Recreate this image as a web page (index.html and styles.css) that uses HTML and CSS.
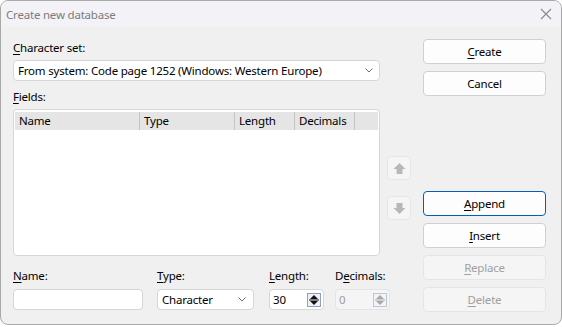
FILE: index.html
```html
<!DOCTYPE html>
<html lang="en">
<head>
    <meta charset="UTF-8">
    <title>Create new database</title>
    <link rel="stylesheet" href="styles.css">
</head>
<body>
    <div class="window">
        <div class="titlebar">
            <span class="title">Create new database</span>
            <svg class="close" width="12" height="12" viewBox="0 0 12 12">
                <path d="M1 1 L11 11 M11 1 L1 11" stroke="#8a8a8a" stroke-width="1.1" fill="none"/>
            </svg>
        </div>

        <div class="content">
            <div class="main">
                <div class="lbl"><u>C</u>haracter set:</div>
                <div class="select charset">
                    <span>From system: Code page 1252 (Windows: Western Europe)</span>
                    <svg class="chev" width="8" height="5" viewBox="0 0 8 5"><path d="M0.5 0.5 L4 4 L7.5 0.5" stroke="#707070" fill="none"/></svg>
                </div>

                <div class="lbl fields-lbl"><u>F</u>ields:</div>
                <div class="list-row">
                    <div class="listview">
                        <div class="lv-header">
                            <div class="col c-name">Name</div>
                            <div class="col c-type">Type</div>
                            <div class="col c-len">Length</div>
                            <div class="col c-dec">Decimals</div>
                            <div class="col c-fill"></div>
                        </div>
                    </div>
                    <div class="movers">
                        <button class="mover">
                            <svg width="13" height="13" viewBox="0 0 13 13"><polygon points="6.5,1 12.5,7 9.5,7 9.5,12 3.5,12 3.5,7 0.5,7" fill="#b8b8b8"/></svg>
                        </button>
                        <button class="mover">
                            <svg width="13" height="13" viewBox="0 0 13 13"><polygon points="6.5,12 12.5,6 9.5,6 9.5,1 3.5,1 3.5,6 0.5,6" fill="#b8b8b8"/></svg>
                        </button>
                    </div>
                </div>

                <div class="edit-row">
                    <div class="field f-name">
                        <div class="lbl"><u>N</u>ame:</div>
                        <div class="input name-input"></div>
                    </div>
                    <div class="field f-type">
                        <div class="lbl"><u>T</u>ype:</div>
                        <div class="select type-select">
                            <span>Character</span>
                            <svg class="chev" width="8" height="5" viewBox="0 0 8 5"><path d="M0.5 0.5 L4 4 L7.5 0.5" stroke="#707070" fill="none"/></svg>
                        </div>
                    </div>
                    <div class="field f-len">
                        <div class="lbl"><u>L</u>ength:</div>
                        <div class="input spin">
                            <span>30</span>
                            <svg width="14" height="14" viewBox="0 0 14 14">
                                <rect x="0.5" y="0.5" width="13" height="13" fill="#eef2f8" stroke="#8fa0bc"/>
                                <polygon points="7,2 11,6 3,6" fill="#111"/>
                                <path d="M2 7 H12" stroke="#111"/>
                                <polygon points="3,8 11,8 7,12" fill="#111"/>
                            </svg>
                        </div>
                    </div>
                    <div class="field f-dec">
                        <div class="lbl">D<u>e</u>cimals:</div>
                        <div class="input spin disabled">
                            <span>0</span>
                            <svg width="14" height="14" viewBox="0 0 14 14">
                                <rect x="0.5" y="0.5" width="13" height="13" fill="#f2f4f8" stroke="#bcc6d8"/>
                                <polygon points="7,2 11,6 3,6" fill="#a8a8a8"/>
                                <path d="M2 7 H12" stroke="#a8a8a8"/>
                                <polygon points="3,8 11,8 7,12" fill="#a8a8a8"/>
                            </svg>
                        </div>
                    </div>
                </div>
            </div>

            <div class="side">
                <button class="btn"><u>C</u>reate</button>
                <button class="btn">Cancel</button>
                <button class="btn btn-default append"><u>A</u>ppend</button>
                <button class="btn"><u>I</u>nsert</button>
                <button class="btn" disabled><u>R</u>eplace</button>
                <button class="btn" disabled><u>D</u>elete</button>
            </div>
        </div>
    </div>
</body>
</html>
```

FILE: styles.css
```css
:root {
    --text: #000;
    --muted: #a0a0a0;
    --border: #d0d0d0;
    --accent: #005fb8;
}

* {
    box-sizing: border-box;
}

body {
    margin: 0;
    background: #fff;
    font-family: 'Noto Sans', Arial, sans-serif;
    font-size: 11.5px;
    letter-spacing: -0.2px;
    color: var(--text);
}

u {
    text-decoration-thickness: 1px;
    text-underline-offset: 2px;
}

.window {
    width: 562px;
    height: 325px;
    border: 1px solid #a9a9a9;
    border-radius: 8px;
    background: #f0f0f0;
    overflow: hidden;
}

.titlebar {
    height: 26px;
    background: #f3f2f6;
    display: flex;
    align-items: center;
    justify-content: space-between;
    padding: 0 9px 0 5px;
}

.title {
    color: #7c7c7c;
}

.content {
    display: flex;
    gap: 12px;
    padding: 12px 15px 0 12px;
}

.main {
    width: 398px;
}

.lbl {
    line-height: 16px;
    height: 16px;
    white-space: nowrap;
}

.main > .lbl:first-child {
    margin-top: 1px;
}

.select,
.input {
    height: 21px;
    background: #fff;
    border: 1px solid #d6d6d6;
    border-radius: 4px;
    display: flex;
    align-items: center;
    justify-content: space-between;
    padding: 0 6px 0 4px;
    white-space: nowrap;
}

.charset {
    width: 367px;
    margin-top: 4px;
}

.fields-lbl {
    margin-top: 8px;
}

.list-row {
    display: flex;
    gap: 7px;
    margin-top: 4px;
}

.listview {
    width: 367px;
    height: 147px;
    background: #fff;
    border: 1px solid #d6d6d6;
    border-radius: 4px;
    padding: 2px 1px;
}

.lv-header {
    display: flex;
    height: 19px;
    background: #e5e5e5;
    border-bottom: 1px solid #fff;
}

.col {
    padding-left: 4px;
    line-height: 18px;
    border-right: 1px solid #c4c4c4;
}

.c-name { width: 125px; }
.c-type { width: 95px; }
.c-len { width: 60px; }
.c-dec { width: 60px; }
.c-fill { flex: 1; border-right: none; }

.movers {
    display: flex;
    flex-direction: column;
    gap: 16px;
    padding-top: 47px;
}

.mover {
    width: 24px;
    height: 24px;
    padding: 0;
    background: #f5f5f5;
    border: 1px solid #e6e6e6;
    border-radius: 4px;
    display: flex;
    align-items: center;
    justify-content: center;
}

.edit-row {
    display: flex;
    margin-top: 12px;
}

.field .lbl {
    margin-bottom: 5px;
}

.f-name { width: 144px; }
.f-type { width: 112px; }
.f-len { width: 66px; }
.f-dec { width: 55px; }

.name-input { width: 130px; }
.type-select { width: 97px; padding-right: 7px; }

.spin {
    width: 55px;
    padding: 0 2px 0 3px;
}

.spin.disabled {
    background: #f5f5f5;
    border-color: #e4e4e4;
    color: var(--muted);
}

.side {
    width: 123px;
    display: flex;
    flex-direction: column;
    gap: 7px;
}

.btn {
    height: 25px;
    width: 100%;
    padding: 0;
    background: #fdfdfd;
    border: 1px solid var(--border);
    border-radius: 4px;
    font-family: inherit;
    font-size: 11.5px;
    letter-spacing: -0.2px;
    color: var(--text);
}

.btn-default {
    border-color: var(--accent);
}

.append {
    margin-top: 88px;
}

.btn:disabled {
    background: #f5f5f5;
    border-color: #e5e5e5;
    color: var(--muted);
}
```
